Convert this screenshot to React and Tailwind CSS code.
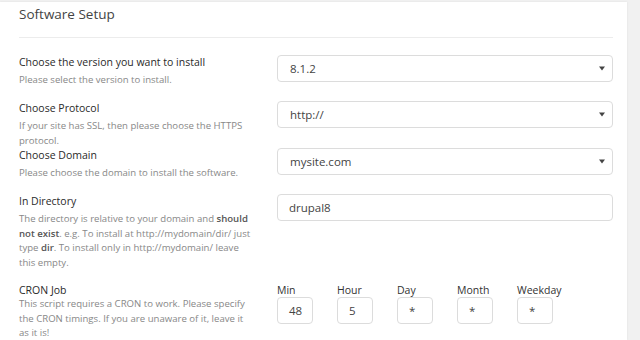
const font = { fontFamily: '"Open Sans", "Noto Sans", sans-serif' };

const Caret = () => (
  <svg width="6" height="5" viewBox="0 0 6 5" className="shrink-0">
    <path d="M0 0.5 H6 L3 4.5 Z" fill="#444" />
  </svg>
);

const SelectBox = ({ value }) => (
  <div className="flex items-center justify-between h-[27px] w-[336px] rounded-[4px] border border-[#dcdcdc] bg-white pl-[12px] pr-[7px] text-[11.5px] text-[#444]">
    <span>{value}</span>
    <Caret />
  </div>
);

const TextBox = ({ value, width = "w-[336px]" }) => (
  <div className={`flex items-center h-[27px] ${width} rounded-[4px] border border-[#dcdcdc] bg-white pl-[11px] text-[11.5px] text-[#444]`}>
    {value}
  </div>
);

const Label = ({ children, gap = true }) => (
  <div className={`text-[10.5px] font-medium leading-[14px] text-[#2a2a2a] whitespace-nowrap ${gap ? "mb-[4px]" : ""}`}>
    {children}
  </div>
);

const Desc = ({ children }) => (
  <div className="text-[9.6px] leading-[14.5px] text-[#888] whitespace-nowrap">{children}</div>
);

const Row = ({ left, right, className = "" }) => (
  <div className={`flex items-start ${className}`}>
    <div className="w-[240px] shrink-0">{left}</div>
    <div className="ml-[18px]">{right}</div>
  </div>
);

const cron = [
  { label: "Min", value: "48" },
  { label: "Hour", value: "5" },
  { label: "Day", value: "*" },
  { label: "Month", value: "*" },
  { label: "Weekday", value: "*" },
];

const B = ({ children }) => <b className="font-semibold text-[#555]">{children}</b>;

const App = () => {
  return (
    <div className="w-[640px] h-[340px] overflow-hidden bg-[#f1f1f1] pt-[2px]" style={font}>
      <div className="w-[627px] h-[338px] bg-white shadow-[0_0_2px_rgba(0,0,0,0.08)] pl-[19px] pr-[14px]">
        <div className="pt-[1px] text-[13.5px] leading-[22px] text-[#444]">Software Setup</div>
        <div className="mt-[12px] h-px bg-[#ececec]" />

        <div className="mt-[17px]">
          <Row
            className="min-h-[46px]"
            left={<><Label>Choose the version you want to install</Label><Desc>Please select the version to install.</Desc></>}
            right={<SelectBox value="8.1.2" />}
          />
          <Row
            className="min-h-[46px]"
            left={<><Label>Choose Protocol</Label><Desc>If your site has SSL, then please choose the HTTPS<br />protocol.</Desc></>}
            right={<SelectBox value="http://" />}
          />
          <Row
            className="min-h-[46px]"
            left={<><Label>Choose Domain</Label><Desc>Please choose the domain to install the software.</Desc></>}
            right={<SelectBox value="mysite.com" />}
          />
          <Row
            className="pb-[13px]"
            left={
              <>
                <Label>In Directory</Label>
                <Desc>
                  The directory is relative to your domain and <B>should</B>
                  <br />
                  <B>not exist</B>. e.g. To install at http://mydomain/dir/ just
                  <br />
                  type <B>dir</B>. To install only in http://mydomain/ leave
                  <br />
                  this empty.
                </Desc>
              </>
            }
            right={<TextBox value="drupal8" />}
          />
          <Row
            left={
              <>
                <Label gap={false}>CRON Job</Label>
                <Desc>
                  This script requires a CRON to work. Please specify
                  <br />
                  the CRON timings. If you are unaware of it, leave it
                  <br />
                  as it is!
                </Desc>
              </>
            }
            right={
              <div className="flex gap-[24px]">
                {cron.map((c) => (
                  <div key={c.label}>
                    <div className="text-[10.5px] leading-[14px] text-[#333]">{c.label}</div>
                    <TextBox value={c.value} width="w-[36px]" />
                  </div>
                ))}
              </div>
            }
          />
        </div>
      </div>
    </div>
  );
};

export default App;
